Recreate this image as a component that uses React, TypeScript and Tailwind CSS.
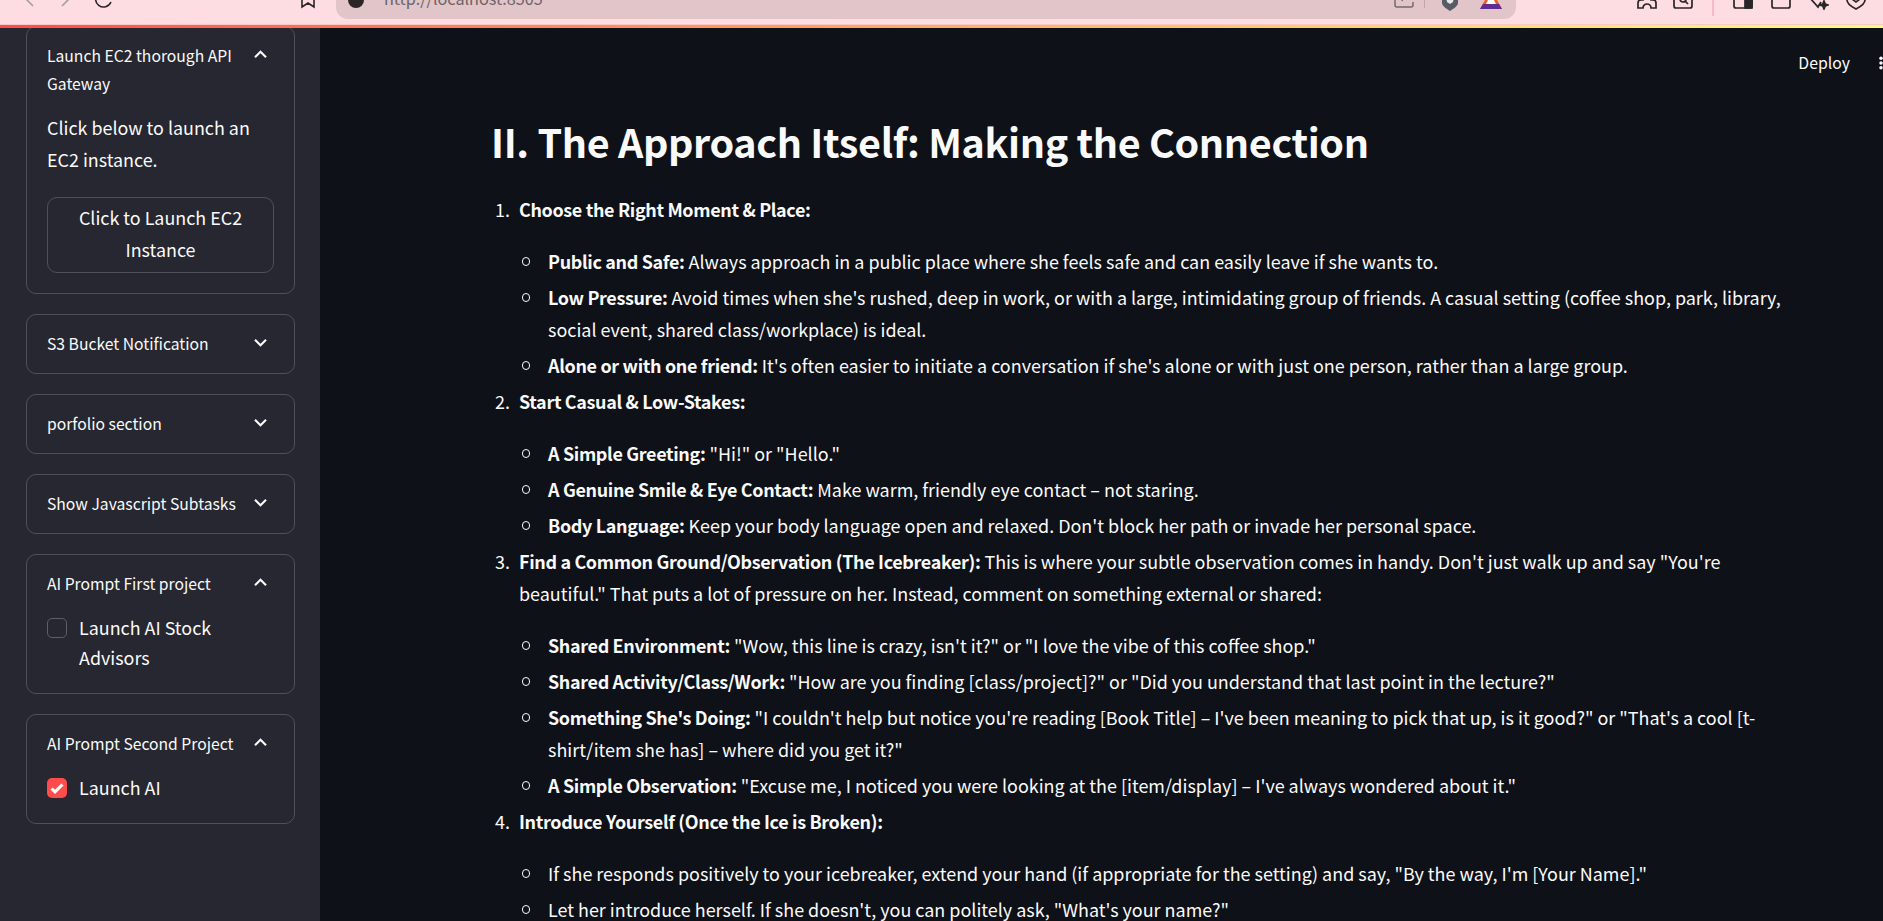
import type { ReactNode } from "react"

const sections: { title: string; intro?: string; items: ReactNode[] }[] = [
  {
    title: "Choose the Right Moment & Place:",
    items: [
      <><b>Public and Safe:</b> Always approach in a public place where she feels safe and can easily leave if she wants to.</>,
      <><b>Low Pressure:</b> Avoid times when she's rushed, deep in work, or with a large, intimidating group of friends. A casual setting (coffee shop, park, library, social event, shared class/workplace) is ideal.</>,
      <><b>Alone or with one friend:</b> It's often easier to initiate a conversation if she's alone or with just one person, rather than a large group.</>,
    ],
  },
  {
    title: "Start Casual & Low-Stakes:",
    items: [
      <><b>A Simple Greeting:</b> "Hi!" or "Hello."</>,
      <><b>A Genuine Smile & Eye Contact:</b> Make warm, friendly eye contact – not staring.</>,
      <><b>Body Language:</b> Keep your body language open and relaxed. Don't block her path or invade her personal space.</>,
    ],
  },
  {
    title: "Find a Common Ground/Observation (The Icebreaker):",
    intro: " This is where your subtle observation comes in handy. Don't just walk up and say \"You're beautiful.\" That puts a lot of pressure on her. Instead, comment on something external or shared:",
    items: [
      <><b>Shared Environment:</b> "Wow, this line is crazy, isn't it?" or "I love the vibe of this coffee shop."</>,
      <><b>Shared Activity/Class/Work:</b> "How are you finding [class/project]?" or "Did you understand that last point in the lecture?"</>,
      <><b>Something She's Doing:</b> "I couldn't help but notice you're reading [Book Title] – I've been meaning to pick that up, is it good?" or "That's a cool [t-shirt/item she has] – where did you get it?"</>,
      <><b>A Simple Observation:</b> "Excuse me, I noticed you were looking at the [item/display] – I've always wondered about it."</>,
    ],
  },
  {
    title: "Introduce Yourself (Once the Ice is Broken):",
    items: [
      <>If she responds positively to your icebreaker, extend your hand (if appropriate for the setting) and say, "By the way, I'm [Your Name]."</>,
      <>Let her introduce herself. If she doesn't, you can politely ask, "What's your name?"</>,
    ],
  },
]

function Chevron({ open }: { open: boolean }) {
  return (
    <svg viewBox="0 0 24 24" className="h-[25px] w-[25px] shrink-0 fill-[#fafafa]">
      <path d={open ? "M12 8l-6 6 1.41 1.41L12 10.83l4.59 4.58L18 14z" : "M16.59 8.59L12 13.17 7.41 8.59 6 10l6 6 6-6z"} />
    </svg>
  )
}

function Expander({ title, open = false, children }: { title: string; open?: boolean; children?: ReactNode }) {
  return (
    <div className="rounded-[10px] border border-[#4f5058]">
      <div className="flex items-start justify-between pl-[20px] pr-[21px] pt-[15px] pb-[15px]">
        <div className="text-[15.7px] leading-[28px]">{title}</div>
        <Chevron open={open} />
      </div>
      {open && <div className="px-[20px] pb-[20px]">{children}</div>}
    </div>
  )
}

function Check({ label, checked = false }: { label: string; checked?: boolean }) {
  return (
    <div className="flex items-start gap-[12px] pb-[1px]">
      <div className={`mt-[5px] flex h-[20px] w-[20px] shrink-0 items-center justify-center rounded-[5px] ${checked ? "bg-[#ff4b4b]" : "border border-[#5e5f66]"}`}>
        {checked && (
          <svg viewBox="0 0 16 16" className="h-[16px] w-[16px] fill-none stroke-white stroke-[3]">
            <path d="M2.5 8.5l3.5 3.3 7.5-7.3" />
          </svg>
        )}
      </div>
      <div className="-mt-[1px] text-[17.9px] leading-[30px]">{label}</div>
    </div>
  )
}

function BrowserBar() {
  return (
    <div className="flex h-[24px] shrink-0 items-end overflow-hidden bg-[#fddde2]">
      <svg viewBox="0 0 12 20" className="mb-[16px] ml-[23px] h-[20px] w-[12px] fill-none stroke-[#a89a9d] stroke-[1.6]"><path d="M10 2L2 10l8 8" /></svg>
      <svg viewBox="0 0 12 20" className="mb-[16px] ml-[25px] h-[20px] w-[12px] fill-none stroke-[#a89a9d] stroke-[1.6]"><path d="M2 2l8 8-8 8" /></svg>
      <svg viewBox="0 0 20 20" className="mb-[15px] ml-[22px] h-[20px] w-[20px] fill-none stroke-[#2a2527] stroke-[1.6]"><path d="M17 13a8 8 0 1 1 0-6" /></svg>
      <svg viewBox="0 0 16 20" className="mb-[15px] ml-[186px] h-[20px] w-[16px] fill-none stroke-[#2a2527] stroke-[1.6]"><path d="M2 1h12v17l-6-4-6 4z" /></svg>
      <div className="ml-[20px] flex h-[19px] w-[1180px] shrink-0 items-end self-start overflow-hidden rounded-b-[12px] bg-[#e1c5c9]">
        <div className="mb-[11px] ml-[12px] h-[16px] w-[16px] shrink-0 rounded-full bg-[#2a2527]" />
        <div className="mb-[11px] ml-[20px] w-[180px] shrink-0 text-[16.2px] leading-[20px] whitespace-nowrap text-[#6d6468]">http://localhost:8505</div>
        <svg viewBox="0 0 20 20" className="mb-[11px] ml-[830px] h-[20px] w-[20px] shrink-0 fill-none stroke-[#74696d] stroke-[1.5]"><path d="M1 4v13a2 2 0 0 0 2 2h14a2 2 0 0 0 2-2v-3M8 13c1-4 4-6 8-6" /></svg>
        <div className="mb-[11px] ml-[10px] h-[18px] w-[1px] shrink-0 bg-[#bca8ac]" />
        <svg viewBox="0 0 18 20" className="mb-[8px] ml-[16px] h-[20px] w-[18px] shrink-0 fill-[#565b66]"><path d="M1 0h16v12c0 3-5 6-8 8-3-2-8-5-8-8z" /><path d="M5 6h8l-1 5-3 2-3-2z" className="fill-[#e8e8ea]" /></svg>
        <svg viewBox="0 0 22 20" className="mb-[10px] ml-[21px] h-[20px] w-[22px] shrink-0"><path d="M11 0L22 20H0z" fill="#f15a22" /><path d="M0 20l3-5h16l3 5z" fill="#5f2d91" /><path d="M11 5l5 10H6z" fill="#fff" /></svg>
      </div>
      <svg viewBox="0 0 20 20" className="mb-[15px] ml-[121px] h-[20px] w-[20px] fill-none stroke-[#2a2527] stroke-[1.7]"><path d="M1 19v-5a3 3 0 0 1 3-3h2V4h8v7h2a3 3 0 0 1 3 3v5h-5a3 3 0 0 0-8 0z" /></svg>
      <svg viewBox="0 0 20 20" className="mb-[15px] ml-[16px] h-[20px] w-[20px] fill-none stroke-[#2a2527] stroke-[1.7]"><path d="M1 2h18v15a2 2 0 0 1-2 2H3a2 2 0 0 1-2-2z" /><circle cx="10" cy="10" r="3" /><path d="M12 12l3 3" /></svg>
      <div className="mb-[8px] ml-[19px] h-[20px] w-[2px] bg-[#f9b8c3]" />
      <svg viewBox="0 0 20 20" className="mb-[15px] ml-[19px] h-[20px] w-[20px] fill-none stroke-[#2a2527] stroke-[1.7]"><path d="M1 1h18v16a2 2 0 0 1-2 2H3a2 2 0 0 1-2-2z" /><path d="M12 1h7v18h-7z" className="fill-[#2a2527]" /></svg>
      <svg viewBox="0 0 20 20" className="mb-[15px] ml-[18px] h-[20px] w-[20px] fill-none stroke-[#2a2527] stroke-[1.7]"><path d="M1 1h18v16a2 2 0 0 1-2 2H3a2 2 0 0 1-2-2zM10 9h9M10 1v8" /></svg>
      <svg viewBox="0 0 20 20" className="mb-[14px] ml-[18px] h-[20px] w-[20px] fill-none stroke-[#2a2527] stroke-[1.7]"><path d="M1 8l8 9 3-5" /><path d="M15 11l1.2 3 2.8 1-2.8 1-1.2 3-1.2-3-2.8-1 2.8-1z" className="fill-[#2a2527]" /></svg>
      <svg viewBox="0 0 20 20" className="mb-[14px] ml-[17px] h-[20px] w-[20px] fill-none stroke-[#2a2527] stroke-[1.7]"><path d="M1 1h18v9c0 4-5 7-9 9-4-2-9-5-9-9zM6 9l4 3 4-3" /></svg>
    </div>
  )
}

export default function App() {
  return (
    <div className="flex h-screen flex-col overflow-hidden bg-[#0e1117] font-['Noto_Sans_CJK_SC','Noto_Sans',sans-serif] text-[#fafafa]">
      <BrowserBar />
      <div className="h-[4px] shrink-0 border-t border-t-[#f9c9c4] bg-linear-to-r from-[#ff4b4b] to-[#fffd80]" />
      <div className="flex min-h-0 flex-1">
        <aside className="w-[320px] shrink-0 overflow-hidden bg-[#262730] pl-[26px] pr-[25px]">
          <div className="-mt-[2px] flex flex-col gap-[20px]">
            <Expander title="Launch EC2 thorough API Gateway" open>
              <p className="-mt-[2px] text-[17.9px] leading-[32px]">Click below to launch an EC2 instance.</p>
              <button className="mt-[22px] w-full rounded-[10px] border border-[#4f5058] px-[20px] pt-[3px] pb-[7px] text-[17.9px] leading-[32px]">
                Click to Launch EC2 Instance
              </button>
            </Expander>
            <Expander title="S3 Bucket Notification" />
            <Expander title="porfolio section" />
            <Expander title="Show Javascript Subtasks" />
            <Expander title="AI Prompt First project" open>
              <Check label="Launch AI Stock Advisors" />
            </Expander>
            <Expander title="AI Prompt Second Project" open>
              <Check label="Launch AI" checked />
            </Expander>
          </div>
        </aside>
        <main className="min-w-0 flex-1 overflow-hidden pl-[171px]">
          <div className="flex items-center justify-end pt-[21px]">
            <div className="text-[15.8px] leading-[28px]">Deploy</div>
            <svg viewBox="0 0 6 20" className="ml-[29px] h-[20px] w-[4px] fill-[#fafafa]">
              <circle cx="3" cy="3" r="2.6" /><circle cx="3" cy="10" r="2.6" /><circle cx="3" cy="17" r="2.6" />
            </svg>
          </div>
          <h2 className="mt-[37px] text-[39.5px] font-bold leading-[54px] tracking-[-0.35px]">II. The Approach Itself: Making the Connection</h2>
          <ol className="mt-[25px] w-[1304px] text-[17.95px] leading-[32px] [&_b]:font-bold [&_b]:tracking-[-0.33px]">
            {sections.map((s, n) => (
              <li key={s.title} className="mt-[4px] flex">
                <span className="w-[28px] shrink-0 pl-[4px]">{n + 1}.</span>
                <div className="min-w-0 flex-1">
                  <p className="mb-[20px]"><b>{s.title}</b>{s.intro}</p>
                  <ul>
                    {s.items.map((item, i) => (
                      <li key={i} className="mt-[4px] flex">
                        <span className="ml-[2.5px] mr-[18px] mt-[12px] h-[8.5px] w-[8.5px] shrink-0 rounded-full border border-[#fafafa]" />
                        <div className="min-w-0 flex-1">{item}</div>
                      </li>
                    ))}
                  </ul>
                </div>
              </li>
            ))}
          </ol>
        </main>
      </div>
    </div>
  )
}
